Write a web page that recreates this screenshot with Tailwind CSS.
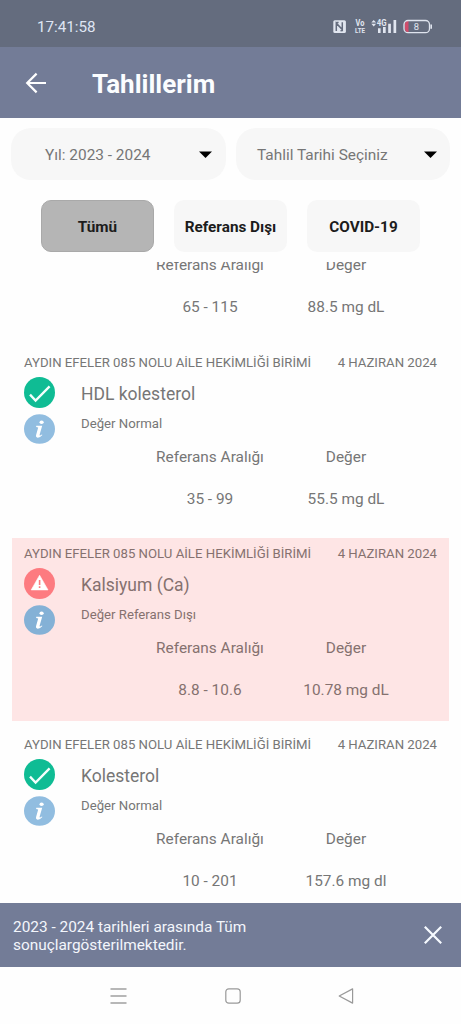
<!DOCTYPE html>
<html lang="tr">
<head>
  <meta charset="UTF-8">
  <meta name="viewport" content="width=device-width, initial-scale=1.0">
  <title>Tahlillerim</title>
  <script src="https://cdn.jsdelivr.net/npm/@tailwindcss/browser@4"></script>
</head>
<body class="bg-[#fefefe] font-['Roboto',sans-serif] text-[#767676]">
  <!-- Icons -->
  <svg class="hidden">
    <symbol id="icon-ok" viewBox="0 0 31 31">
      <circle cx="15.5" cy="15.5" r="15.5" fill="#0fbc94"/>
      <path d="M6 17.6l5.6 6L25.6 9.4" fill="none" stroke="#f4fffc" stroke-width="2.3"/>
    </symbol>
    <symbol id="icon-warning" viewBox="0 0 31 31">
      <circle cx="15.5" cy="15.5" r="15.5" fill="#fd7b80"/>
      <path d="M15.6 7.2L24 21.9H7.2z" fill="#fff" stroke="#fff" stroke-width="0.6" stroke-linejoin="round"/>
      <path d="M15.6 12v5M15.6 18.2v1.8" stroke="#fd7b80" stroke-width="1.6"/>
    </symbol>
    <symbol id="icon-info" viewBox="0 0 31 30">
      <ellipse cx="15.5" cy="15" rx="15.5" ry="14.8" fill="currentColor"/>
      <ellipse cx="17.6" cy="8.2" rx="2.1" ry="1.8" fill="#fff"/>
      <path d="M12.3 11.8h5.9l-2.6 9q-.2 1 .6.7l1.7-1.1.5.7q-2.6 2.8-4.8 2.6-2.1-.2-1.5-2.6l2.1-7.6-2.1-.5z" fill="#fff"/>
    </symbol>
  </svg>

  <div class="flex flex-col h-screen overflow-hidden">
    <!-- Status bar -->
    <div class="h-[47px] shrink-0 bg-[#646c7e] flex items-center justify-between pl-[37px] pr-[28px] pt-[7px]">
      <span class="text-[15.2px] leading-5 text-[#dfe5f3]">17:41:58</span>
      <svg class="w-[101px] h-[18px]" viewBox="332 18 101 18" fill="none">
        <rect x="333.3" y="20.3" width="12.6" height="12.6" rx="1.5" fill="#e1e6f0"/>
        <path d="M336.3 31v-7.8l6 6.4v-7.4M338.6 22.6l-2.3-.2M342.5 30.6l-2 .2" stroke="#646c7e" stroke-width="1.5"/>
        <g fill="#e1e6f0" font-family="Roboto" font-weight="700">
          <text x="355.6" y="26" font-size="8.2" textLength="8.8" lengthAdjust="spacingAndGlyphs">Vo</text>
          <text x="355" y="32.8" font-size="8" textLength="10" lengthAdjust="spacingAndGlyphs">LTE</text>
          <text x="376.8" y="26" font-size="9" textLength="9.8" lengthAdjust="spacingAndGlyphs">4G</text>
          <path d="M371.3 22.5l2.4-2.6 2.4 2.6zM371.3 23.8l2.4 2.6 2.4-2.6z"/>
          <path d="M378 28.2h2.6v4.7H378zM383 27h2.7v5.9H383zM388.2 23.8h2.7v9.1h-2.7zM393.5 20h2.7v12.9h-2.7z"/>
        </g>
        <path d="M408.5 21v11.2h-1q-3-.4-3-5.6t3-5.6z" fill="#cf4d6b"/>
        <rect x="404" y="20.5" width="25.5" height="12.2" rx="4" stroke="#dfe4ee" stroke-width="1.3"/>
        <path d="M431.2 24.4v4.4" stroke="#dfe4ee" stroke-width="1.6"/>
        <text x="413.7" y="30.4" font-size="9.4" font-family="Roboto" fill="#e1e6f0">8</text>
      </svg>
    </div>

    <!-- Header -->
    <div class="h-[71px] shrink-0 bg-[#737c97] flex items-center pl-[25px]">
      <svg class="w-[22px] h-[22px]" viewBox="0 0 22 22" fill="none" stroke="#fff" stroke-width="2.2">
        <path d="M21 11H2.2M11.6 1.6L2.2 11l9.4 9.4"/>
      </svg>
      <h1 class="ml-[45px] pt-0.5 text-[26px] leading-8 font-bold text-[#fbfdff]">Tahlillerim</h1>
    </div>

    <!-- Filters -->
    <div class="shrink-0 flex gap-[10px] px-[11px] pt-[10px] text-[15.4px] leading-5">
      <div class="w-[215px] h-[52px] rounded-[20px] bg-[#f7f7f7] flex items-center justify-between pl-[34px] pr-[14px]">
        <span class="pt-px">Yıl: 2023 - 2024</span>
        <svg class="w-[13px] h-[7px]" viewBox="0 0 13 7"><path d="M0 .5h13L6.5 7z" fill="#000"/></svg>
      </div>
      <div class="w-[214px] h-[52px] rounded-[20px] bg-[#f7f7f7] flex items-center justify-between pl-[21px] pr-[13px]">
        <span class="pt-px">Tahlil Tarihi Seçiniz</span>
        <svg class="w-[13px] h-[7px]" viewBox="0 0 13 7"><path d="M0 .5h13L6.5 7z" fill="#000"/></svg>
      </div>
    </div>

    <!-- Tabs -->
    <div class="shrink-0 flex gap-[20px] pl-[41px] pt-[20px] pb-[10px] text-[15.3px] leading-5 font-bold text-[#1c1c1c]">
      <button class="w-[113px] h-[52px] pt-px rounded-[10px] bg-[#b5b5b5] border border-[#a9a9a9]">Tümü</button>
      <button class="w-[113px] h-[52px] pt-px rounded-[10px] bg-[#f7f7f7] whitespace-nowrap">Referans Dışı</button>
      <button class="w-[113px] h-[52px] pt-px rounded-[10px] bg-[#f7f7f7]">COVID-19</button>
    </div>

    <!-- Results -->
    <div class="flex-1 min-h-0 overflow-hidden px-[12px]">
      <div id="resultList" class="flex flex-col gap-[8px] -mt-[106.7px]"></div>
    </div>

    <!-- Info bar -->
    <div class="h-[64px] shrink-0 bg-[#737c97] flex items-center justify-between pl-[13px] pr-[19px]">
      <p class="text-[15.4px] leading-[18px] text-[#f3f6fc] pt-[2px]">2023 - 2024 tarihleri arasında Tüm<br>sonuçlargösterilmektedir.</p>
      <svg class="w-[18px] h-[18px]" viewBox="0 0 18 18" stroke="#f6faff" stroke-width="2.2"><path d="M.8.8l16.4 16.4M17.2.8L.8 17.2"/></svg>
    </div>

    <!-- Navigation bar -->
    <div class="h-[57px] shrink-0 flex items-center justify-between pl-[110px] pr-[107px]">
      <svg class="w-[17px] h-[16px]" viewBox="0 0 17 16" stroke="#a0a0a0" stroke-width="1.3"><path d="M.5 1h16M.5 8h16M.5 15h16"/></svg>
      <svg class="w-[16px] h-[16px]" viewBox="0 0 16 16" fill="none" stroke="#999" stroke-width="1.2"><rect x=".8" y=".8" width="14.4" height="14.4" rx="3"/></svg>
      <svg class="w-[16px] h-[16px]" viewBox="0 0 16 16" fill="none" stroke="#999" stroke-width="1.2" stroke-linejoin="round"><path d="M1.2 8L14.6.9v14.2z"/></svg>
    </div>
  </div>

  <script>
    const results = [
      { name: 'Glukoz', range: '65 - 115', value: '88.5 mg dL', normal: true },
      { name: 'HDL kolesterol', range: '35 - 99', value: '55.5 mg dL', normal: true },
      { name: 'Kalsiyum (Ca)', range: '8.8 - 10.6', value: '10.78 mg dL', normal: false },
      { name: 'Kolesterol', range: '10 - 201', value: '157.6 mg dl', normal: true },
    ];

    document.getElementById('resultList').innerHTML = results.map((r) => `
      <div class="h-[183.2px] shrink-0 px-[12px] pt-[6px] ${r.normal ? '' : 'bg-[#fee5e5] text-[#85716f]'}">
        <div class="flex justify-between text-[13.2px] leading-[20px] whitespace-nowrap">
          <span>AYDIN EFELER 085 NOLU AİLE HEKİMLİĞİ BİRİMİ</span>
          <span>4 HAZIRAN 2024</span>
        </div>
        <div class="flex gap-[26px] pt-[4px]">
          <div class="flex flex-col gap-[6px]">
            <svg class="w-[31px] h-[31px]"><use href="${r.normal ? '#icon-ok' : '#icon-warning'}"/></svg>
            <svg class="w-[31px] h-[30px] ${r.normal ? 'text-[#91bde0]' : 'text-[#84b1d6]'}"><use href="#icon-info"/></svg>
          </div>
          <div>
            <p class="text-[17.5px] leading-[34px]">${r.name}</p>
            <p class="text-[13.2px] leading-[20px] pt-[3px]">${r.normal ? 'Değer Normal' : 'Değer Referans Dışı'}</p>
          </div>
        </div>
        <div class="grid grid-cols-[136px_136px] gap-y-[22px] pl-[118px] pt-[3px] text-[15.4px] leading-5 text-center whitespace-nowrap">
          <span>Referans Aralığı</span>
          <span>Değer</span>
          <span>${r.range}</span>
          <span>${r.value}</span>
        </div>
      </div>
    `).join('');
  </script>
</body>
</html>
